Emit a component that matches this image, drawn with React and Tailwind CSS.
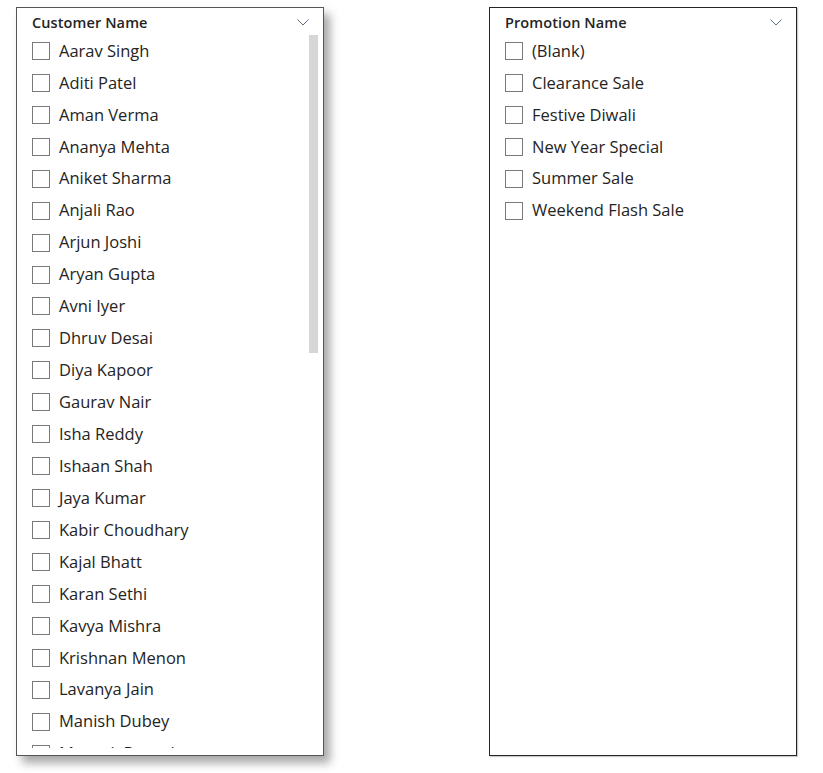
import React from "react";

const customers = [
  "Aarav Singh","Aditi Patel","Aman Verma","Ananya Mehta","Aniket Sharma","Anjali Rao","Arjun Joshi","Aryan Gupta","Avni Iyer","Dhruv Desai","Diya Kapoor","Gaurav Nair","Isha Reddy","Ishaan Shah","Jaya Kumar","Kabir Choudhary","Kajal Bhatt","Karan Sethi","Kavya Mishra","Krishnan Menon","Lavanya Jain","Manish Dubey","Mayank Bansal"
];
const promos = ["(Blank)","Clearance Sale","Festive Diwali","New Year Special","Summer Sale","Weekend Flash Sale"];

function Chevron() {
  return (
    <svg width="12" height="7" viewBox="0 0 12 7" className="block">
      <path d="M0.5 0.5 L6 6 L11.5 0.5" fill="none" stroke="#5b6f86" strokeWidth="1" />
    </svg>
  );
}

function Row({ label }) {
  return (
    <div className="h-[31.95px] flex items-center pl-[15px] shrink-0">
      <div className="w-[18px] h-[18px] border border-[#7a7a7a] bg-white shrink-0" />
      <span className="ml-[9px] text-[16.5px] text-[#252423] leading-none whitespace-nowrap">{label}</span>
    </div>
  );
}

function Panel({ title, items, focused }) {
  return (
    <div
      className={
        "relative w-[308px] h-[749px] bg-white flex flex-col " +
        (focused
          ? "border border-[#555] shadow-[6px_7px_9px_rgba(0,0,0,0.35)]"
          : "border-[1.5px] border-[#252525] shadow-[1px_1px_1px_rgba(0,0,0,0.2)]")
      }
    >
      <div className="h-[27px] shrink-0 flex items-center justify-between pl-[15px] pr-[14px] pt-[4px]">
        <span className="text-[14.5px] font-semibold text-[#252423] leading-none tracking-[0.1px]">{title}</span>
        <span className="-mt-[3px]"><Chevron /></span>
      </div>
      <div className="relative flex-1 overflow-hidden mb-[7px] flex flex-col">
        {items.map((n) => (
          <Row key={n} label={n} />
        ))}
        {focused && (
          <div className="absolute right-[5px] top-0 w-[9px] h-[318px] bg-[#d6d6d6]" />
        )}
      </div>
    </div>
  );
}

export default function App() {
  return (
    <div
      className="w-[823px] h-[773px] bg-white flex items-start gap-[165px] pl-[16px] pt-[7px]"
      style={{ fontFamily: '"Open Sans", "Noto Sans", sans-serif' }}
    >
      <Panel title="Customer Name" items={customers} focused />
      <Panel title="Promotion Name" items={promos} />
    </div>
  );
}
